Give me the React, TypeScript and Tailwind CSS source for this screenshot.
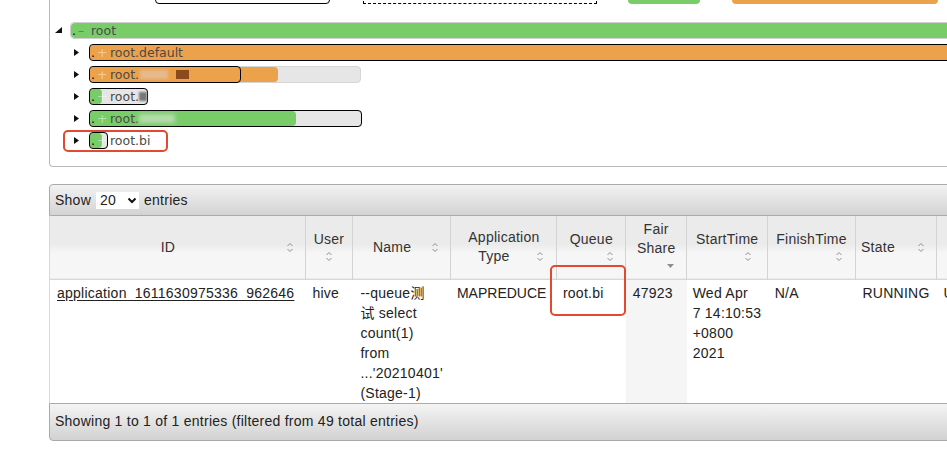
import React from 'react';

type TreeItem = {
  level: number;
  open?: boolean;
  sign: string;
  label: string;
  blur?: React.ReactNode;
  color: string;
  gray?: number; // px, undefined = full width
  fill?: number;
  outline?: number | 'full';
};

const treeItems: TreeItem[] = [
  { level: 0, open: true, sign: '–', label: 'root', color: 'bg-[#78cd69]' },
  { level: 1, sign: '+', label: 'root.default', color: 'bg-[#eca24b]', outline: 'full' },
  {
    level: 1,
    sign: '+',
    label: 'root.',
    color: 'bg-[#eca24b]',
    gray: 272,
    fill: 188,
    outline: 152,
    blur: (
      <>
        <span className="ml-[1px] h-[9px] w-[28px] bg-[#e7b98e] blur-[1.5px]" />
        <span className="ml-[8px] h-[9px] w-[13px] bg-[#8a4a1c] blur-[0.5px]" />
      </>
    ),
  },
  {
    level: 1,
    sign: '+',
    label: 'root.',
    color: 'bg-[#78cd69]',
    gray: 59,
    fill: 12,
    outline: 59,
    blur: <span className="h-[9px] w-[14px] bg-[#777] blur-[1px]" />,
  },
  {
    level: 1,
    sign: '+',
    label: 'root.',
    color: 'bg-[#78cd69]',
    gray: 273,
    fill: 206,
    outline: 273,
    blur: <span className="h-[9px] w-[36px] bg-[#b7dcae] blur-[2px]" />,
  },
  { level: 1, sign: '+', label: 'root.bi', color: 'bg-[#78cd69]', gray: 19, fill: 12, outline: 19 },
];

const SortIcon = ({ className = '' }: { className?: string }) => (
  <svg width="8" height="11" viewBox="0 0 8 11" className={className}>
    <path d="M1.5 4 L4 1.5 L6.5 4" fill="none" stroke="#8e8e8e" strokeWidth="1" />
    <path d="M1.5 7 L4 9.5 L6.5 7" fill="none" stroke="#8e8e8e" strokeWidth="1" />
  </svg>
);

const SortedDesc = ({ className = '' }: { className?: string }) => (
  <svg width="7" height="4" viewBox="0 0 7 4" className={className}>
    <polygon points="0,0 7,0 3.5,4" fill="#8e8e8e" />
  </svg>
);

const TreeRow: React.FC<{ item: TreeItem }> = ({ item }) => {
  const full = item.gray === undefined;
  return (
    <div className="flex h-[22px] items-center">
      {item.level > 0 && <div className="w-[19px] shrink-0" />}
      <div className="flex w-[20px] shrink-0 items-center pl-[5px]">
        {item.open ? (
          <svg width="7" height="6" viewBox="0 0 7 6">
            <polygon points="7,0 7,6 0,6" fill="#111" />
          </svg>
        ) : (
          <svg width="5" height="7" viewBox="0 0 5 7">
            <polygon points="0,0 5,3.5 0,7" fill="#111" />
          </svg>
        )}
      </div>
      <div
        className={`relative h-[17px] rounded-[4px] border ${full ? 'flex-1 border-[#d0d0d0]' : 'border-[#d6d6d6] bg-[#e6e6e6]'}`}
        style={full ? undefined : { width: item.gray }}
      >
        <div
          className={`absolute inset-y-0 left-0 rounded-[4px] ${item.color}`}
          style={{ width: full ? '100%' : item.fill }}
        />
        {item.outline && (
          <div
            className="absolute top-[-1px] bottom-[-1px] left-[-1px] rounded-[4px] border border-black"
            style={{ width: item.outline === 'full' ? 'calc(100% + 2px)' : item.outline }}
          />
        )}
        <div className="relative flex h-full items-center whitespace-nowrap text-[12.5px] leading-[15px] text-[#4a4a4a]">
          <span className="flex w-[20px] shrink-0 items-center">
            <span className="ml-[1px] text-black">.</span>
            <span className={`ml-[2px] ${item.open ? 'text-[#4f8f45]' : 'text-white/45'}`}>{item.sign}</span>
          </span>
          <span>{item.label}</span>
          {item.blur}
        </div>
      </div>
    </div>
  );
};

type Col = { w: string; head: React.ReactNode };

const cols: Col[] = [
  {
    w: 'w-[256px]',
    head: (
      <div className="flex items-center">
        <span className="flex-1 text-center">ID</span>
        <SortIcon className="mr-[11px]" />
      </div>
    ),
  },
  {
    w: 'w-[47px]',
    head: (
      <>
        <div className="text-center">User</div>
        <div className="flex h-[16px] items-center justify-center"><SortIcon /></div>
      </>
    ),
  },
  {
    w: 'w-[97px]',
    head: (
      <div className="flex items-center">
        <span className="flex-1 text-center">Name</span>
        <SortIcon className="mr-[11px]" />
      </div>
    ),
  },
  {
    w: 'w-[106px]',
    head: (
      <>
        <div className="text-center">Application</div>
        <div className="flex items-center">
          <span className="flex-1 text-center">Type</span>
          <SortIcon className="mr-[12px]" />
        </div>
      </>
    ),
  },
  {
    w: 'w-[69px]',
    head: (
      <>
        <div className="text-center">Queue</div>
        <div className="flex h-[16px] items-center justify-end pr-[11px]"><SortIcon /></div>
      </>
    ),
  },
  {
    w: 'w-[61px]',
    head: (
      <>
        <div className="text-center">Fair</div>
        <div className="text-center">Share</div>
        <div className="flex h-[16px] items-center justify-end pr-[12px]"><SortedDesc /></div>
      </>
    ),
  },
  {
    w: 'w-[81px]',
    head: (
      <>
        <div className="text-center">StartTime</div>
        <div className="flex h-[16px] items-center justify-end pr-[15px]"><SortIcon /></div>
      </>
    ),
  },
  {
    w: 'w-[88px]',
    head: (
      <>
        <div className="text-center">FinishTime</div>
        <div className="flex h-[16px] items-center justify-end pr-[12px]"><SortIcon /></div>
      </>
    ),
  },
  {
    w: 'w-[80px]',
    head: (
      <div className="flex items-center">
        <span className="flex-1 pr-[17px] text-center">State</span>
        <SortIcon className="mr-[11px]" />
      </div>
    ),
  },
  {
    w: 'w-[130px]',
    head: <div />,
  },
];

export default function App() {
  return (
    <div className="relative h-[455px] w-[947px] overflow-hidden bg-white">
      {/* queue tree panel */}
      <div className="ml-[49px] w-[960px] rounded-bl-[4px] border-b border-l border-[#b9b9b9] pb-[15px]">
        <div className="flex h-[4px] items-end overflow-hidden">
          <div className="ml-[105px] h-[20px] w-[175px] shrink-0 rounded-[4px] border border-black" />
          <div className="ml-[33px] h-[20px] w-[234px] shrink-0 border border-dashed border-black" />
          <div className="ml-[31px] h-[20px] w-[72px] shrink-0 rounded-[4px] bg-[#78cd69]" />
          <div className="ml-[32px] h-[20px] w-[206px] shrink-0 rounded-[4px] bg-[#eca24b]" />
        </div>
        <div className="pt-[15px] font-['DejaVu_Sans',sans-serif]">
          {treeItems.map((item, i) => (
            <TreeRow key={i} item={item} />
          ))}
        </div>
      </div>

      {/* applications table */}
      <div className="ml-[49px] mt-[17px] w-[1017px] font-['Liberation_Sans','Noto_Sans_CJK_SC',sans-serif] text-[14px] tracking-[0.25px] text-[#222]">
        <div className="flex h-[32px] items-center rounded-tl-[4px] border border-[#aaaaaa] bg-linear-to-b from-[#f2f2f2] to-[#d3d3d3] pl-[5px]">
          <span>Show</span>
          <div className="mx-[5px] flex h-[17px] w-[43px] items-center bg-white pl-[4px]">
            <span>20</span>
            <svg width="10" height="7" viewBox="0 0 10 7" className="ml-[11px]">
              <path d="M1.5 1.5 L5 5 L8.5 1.5" fill="none" stroke="#111" strokeWidth="2" />
            </svg>
          </div>
          <span>entries</span>
        </div>
        <table className="table-fixed border-collapse border-l border-[#d8d8d8]">
          <colgroup>
            {cols.map((c, i) => (
              <col key={i} className={c.w} />
            ))}
          </colgroup>
          <thead>
            <tr className="h-[63px] border-b border-[#d8d8d8] bg-linear-to-b from-[#ebebeb] from-45% to-[#f6f6f6] to-60%">
              {cols.map((c, i) => (
                <th key={i} className="border-r border-[#d3d3d3] p-0 align-middle font-normal leading-[19px] text-[#333]">
                  {c.head}
                </th>
              ))}
            </tr>
          </thead>
          <tbody>
            <tr className="h-[123px] align-top leading-[20px] whitespace-nowrap">
              <td className="px-[7px] pt-[3px]">
                <a className="text-[#222] underline underline-offset-2">application_1611630975336_962646</a>
              </td>
              <td className="px-[7px] pt-[3px]">hive</td>
              <td className="px-[8px] pt-[3px]">
                --queue测<br />试 select<br />count(1)<br />from<br />...'20210401'<br />(Stage-1)
              </td>
              <td className="px-[6px] pt-[3px] tracking-normal">MAPREDUCE</td>
              <td className="px-[6px] pt-[3px]">root.bi</td>
              <td className="bg-[#f5f5f5] px-[7px] pt-[3px]">47923</td>
              <td className="px-[6px] pt-[3px]">
                Wed Apr<br />7 14:10:53<br />+0800<br />2021
              </td>
              <td className="px-[7px] pt-[3px]">N/A</td>
              <td className="px-[7px] pt-[3px]">RUNNING</td>
              <td className="overflow-hidden px-[7px] pt-[3px]">U</td>
            </tr>
          </tbody>
        </table>
        <div className="flex h-[38px] items-center rounded-bl-[4px] border border-[#aaaaaa] bg-linear-to-b from-[#f4f4f4] to-[#d2d2d2] pl-[5px]">
          Showing 1 to 1 of 1 entries (filtered from 49 total entries)
        </div>
      </div>

      {/* annotation boxes */}
      <div className="absolute left-[63px] top-[130px] h-[22px] w-[105px] rounded-[5px] border-2 border-[#df4a30]" />
      <div className="absolute left-[550px] top-[265px] h-[51px] w-[76px] rounded-[5px] border-2 border-[#df4a30]" />
    </div>
  );
}
